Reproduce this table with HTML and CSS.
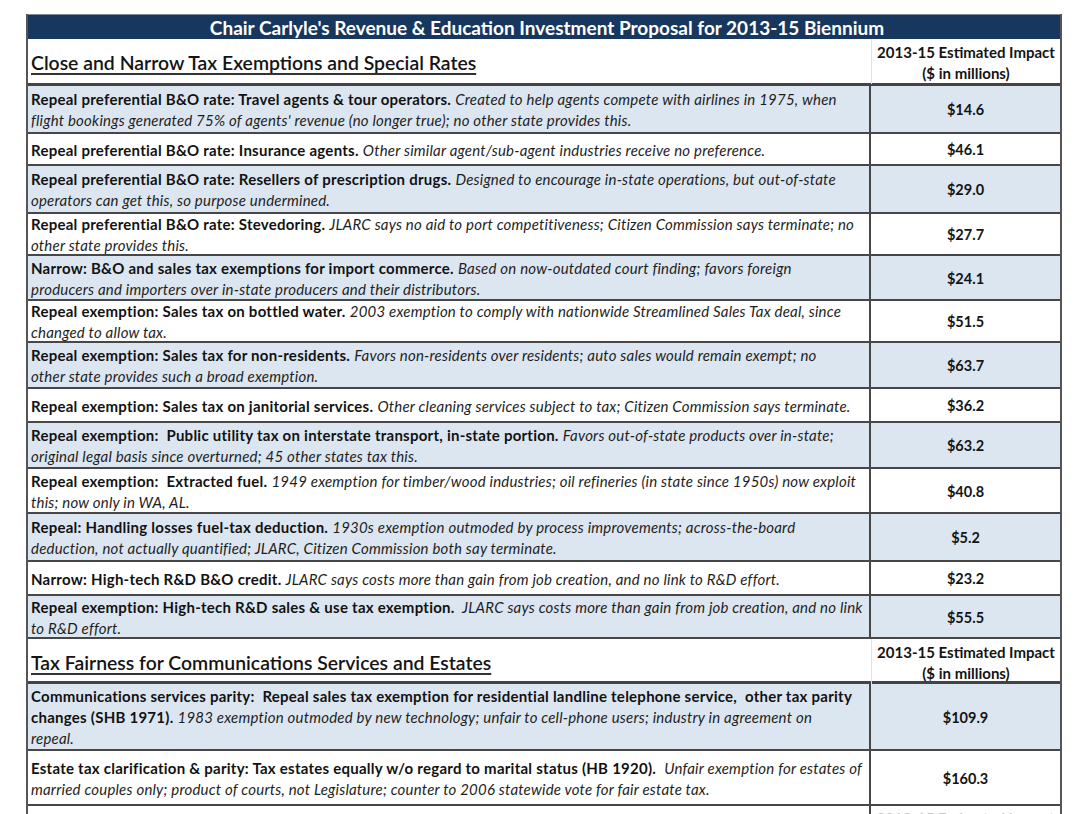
FILE: index.html
```html
<!DOCTYPE html>
<html lang="en">
<head>
<meta charset="utf-8">
<title>Chair Carlyle's Revenue &amp; Education Investment Proposal</title>
<link rel="stylesheet" href="styles.css">
</head>
<body>
<div class="sheet">
  <div class="title">Chair Carlyle's Revenue &amp; Education Investment Proposal for 2013-15 Biennium</div>

  <div class="sec">
    <div class="sec-label"><span>Close and Narrow Tax Exemptions and Special Rates</span></div>
    <div class="sec-impact">2013-15 Estimated Impact<br>($ in millions)</div>
  </div>

  <div class="row blue">
    <div class="desc"><b>Repeal preferential B&amp;O rate: Travel agents &amp; tour operators.</b> <i>Created to help agents compete with airlines in 1975, when<br>flight bookings generated 75% of agents' revenue (no longer true); no other state provides this.</i></div>
    <div class="amt">$14.6</div>
  </div>
  <div class="row">
    <div class="desc"><b>Repeal preferential B&amp;O rate: Insurance agents.</b> <i>Other similar agent/sub-agent industries receive no preference.</i></div>
    <div class="amt">$46.1</div>
  </div>
  <div class="row blue">
    <div class="desc"><b>Repeal preferential B&amp;O rate: Resellers of prescription drugs.</b> <i>Designed to encourage in-state operations, but out-of-state<br>operators can get this, so purpose undermined.</i></div>
    <div class="amt">$29.0</div>
  </div>
  <div class="row">
    <div class="desc"><b>Repeal preferential B&amp;O rate: Stevedoring.</b> <i>JLARC says no aid to port competitiveness; Citizen Commission says terminate; no<br>other state provides this.</i></div>
    <div class="amt">$27.7</div>
  </div>
  <div class="row blue">
    <div class="desc"><b>Narrow: B&amp;O and sales tax exemptions for import commerce.</b> <i>Based on now-outdated court finding; favors foreign<br>producers and importers over in-state producers and their distributors.</i></div>
    <div class="amt">$24.1</div>
  </div>
  <div class="row">
    <div class="desc"><b>Repeal exemption: Sales tax on bottled water.</b> <i>2003 exemption to comply with nationwide Streamlined Sales Tax deal, since<br>changed to allow tax.</i></div>
    <div class="amt">$51.5</div>
  </div>
  <div class="row blue">
    <div class="desc"><b>Repeal exemption: Sales tax for non-residents.</b> <i>Favors non-residents over residents; auto sales would remain exempt; no<br>other state provides such a broad exemption.</i></div>
    <div class="amt">$63.7</div>
  </div>
  <div class="row">
    <div class="desc"><b>Repeal exemption: Sales tax on janitorial services.</b> <i>Other cleaning services subject to tax; Citizen Commission says terminate.</i></div>
    <div class="amt">$36.2</div>
  </div>
  <div class="row blue">
    <div class="desc"><b>Repeal exemption:&nbsp; Public utility tax on interstate transport, in-state portion.</b> <i>Favors out-of-state products over in-state;<br>original legal basis since overturned; 45 other states tax this.</i></div>
    <div class="amt">$63.2</div>
  </div>
  <div class="row">
    <div class="desc"><b>Repeal exemption:&nbsp; Extracted fuel.</b> <i>1949 exemption for timber/wood industries; oil refineries (in state since 1950s) now exploit<br>this; now only in WA, AL.</i></div>
    <div class="amt">$40.8</div>
  </div>
  <div class="row blue">
    <div class="desc"><b>Repeal: Handling losses fuel-tax deduction.</b> <i>1930s exemption outmoded by process improvements; across-the-board<br>deduction, not actually quantified; JLARC, Citizen Commission both say terminate.</i></div>
    <div class="amt">$5.2</div>
  </div>
  <div class="row">
    <div class="desc"><b>Narrow: High-tech R&amp;D B&amp;O credit.</b> <i>JLARC says costs more than gain from job creation, and no link to R&amp;D effort.</i></div>
    <div class="amt">$23.2</div>
  </div>
  <div class="row blue">
    <div class="desc"><b>Repeal exemption: High-tech R&amp;D sales &amp; use tax exemption.</b> <i>&nbsp;JLARC says costs more than gain from job creation, and no link<br>to R&amp;D effort.</i></div>
    <div class="amt">$55.5</div>
  </div>

  <div class="sec">
    <div class="sec-label"><span>Tax Fairness for Communications Services and Estates</span></div>
    <div class="sec-impact">2013-15 Estimated Impact<br>($ in millions)</div>
  </div>

  <div class="row blue">
    <div class="desc"><b>Communications services parity:&nbsp; Repeal sales tax exemption for residential landline telephone service,&nbsp; other tax parity<br>changes (SHB 1971).</b> <i>1983 exemption outmoded by new technology; unfair to cell-phone users; industry in agreement on<br>repeal.</i></div>
    <div class="amt">$109.9</div>
  </div>
  <div class="row">
    <div class="desc"><b>Estate tax clarification &amp; parity: Tax estates equally w/o regard to marital status (HB 1920).</b>&nbsp; <i>Unfair exemption for estates of<br>married couples only; product of courts, not Legislature; counter to 2006 statewide vote for fair estate tax.</i></div>
    <div class="amt">$160.3</div>
  </div>
  <div class="row tail">
    <div class="desc"></div>
    <div class="amt ghost">2013-15 Estimated Impact</div>
  </div>
</div>
</body>
</html>
```
FILE: styles.css
```css
html, body {
  margin: 0;
  padding: 0;
  background: #ffffff;
  overflow: hidden;
}

body {
  font-family: Lato, "Noto Sans", "Liberation Sans", sans-serif;
  color: #141414;
  height: 814px;
}

.sheet {
  margin: 14px 0 0 26px;
  width: 1032px;
  border-left: 2px solid #555555;
  border-right: 2px solid #555555;
  display: grid;
  grid-template-rows: 25px 47px 48px 32px 48px 42px 45px 42px 46px 34px 46px 45px 48px 34px 43px 45px 67px 55px 40px;
}

.title {
  background: #17375e;
  color: #ffffff;
  font-weight: 700;
  font-size: 19px;
  display: flex;
  align-items: center;
  justify-content: center;
  border-top: 1px solid #7c8a9c;
  box-sizing: border-box;
  padding-left: 6px;
}

.sec,
.row {
  display: grid;
  grid-template-columns: 843px 189px;
  box-sizing: border-box;
  border-bottom: 2px solid #474747;
}

.sec {
  border-bottom: 3px solid #444444;
  background: #ffffff;
}

.sec-label {
  display: flex;
  align-items: flex-end;
  padding: 0 0 10px 3px;
  font-size: 19.4px;
  font-weight: 600;
  color: #141414;
}

.sec-label span {
  text-decoration: underline;
  text-decoration-thickness: 2px;
  text-decoration-color: #333333;
  text-underline-offset: 3px;
}

.sec-impact {
  border-left: 1px solid #e2e2e2;
  text-align: center;
  font-weight: 700;
  font-size: 15px;
  line-height: 21px;
  display: flex;
  flex-direction: column;
  justify-content: center;
  padding-top: 3px;
}

.row.blue {
  background: #dce6f1;
}

.desc {
  border-right: 2px solid #474747;
  padding: 2px 2px 0 3px;
  font-size: 15px;
  letter-spacing: 0.25px;
  line-height: 21px;
  display: flex;
  align-items: center;
  white-space: nowrap;
  overflow: hidden;
}

.desc > * {
  display: contents;
}

.desc b {
  font-weight: 700;
  color: #121212;
}

.desc i {
  font-style: italic;
  color: #1e1e1e;
  letter-spacing: 0.2px;
}

.amt {
  display: flex;
  align-items: center;
  justify-content: center;
  font-weight: 700;
  font-size: 14.5px;
  color: #141414;
  padding-top: 1px;
}

.row.tail {
  border-bottom: none;
}

.row.tail .amt.ghost {
  align-items: flex-start;
  padding-top: 3px;
  font-size: 15px;
  color: #c8c8c8;
  font-weight: 700;
}
```
